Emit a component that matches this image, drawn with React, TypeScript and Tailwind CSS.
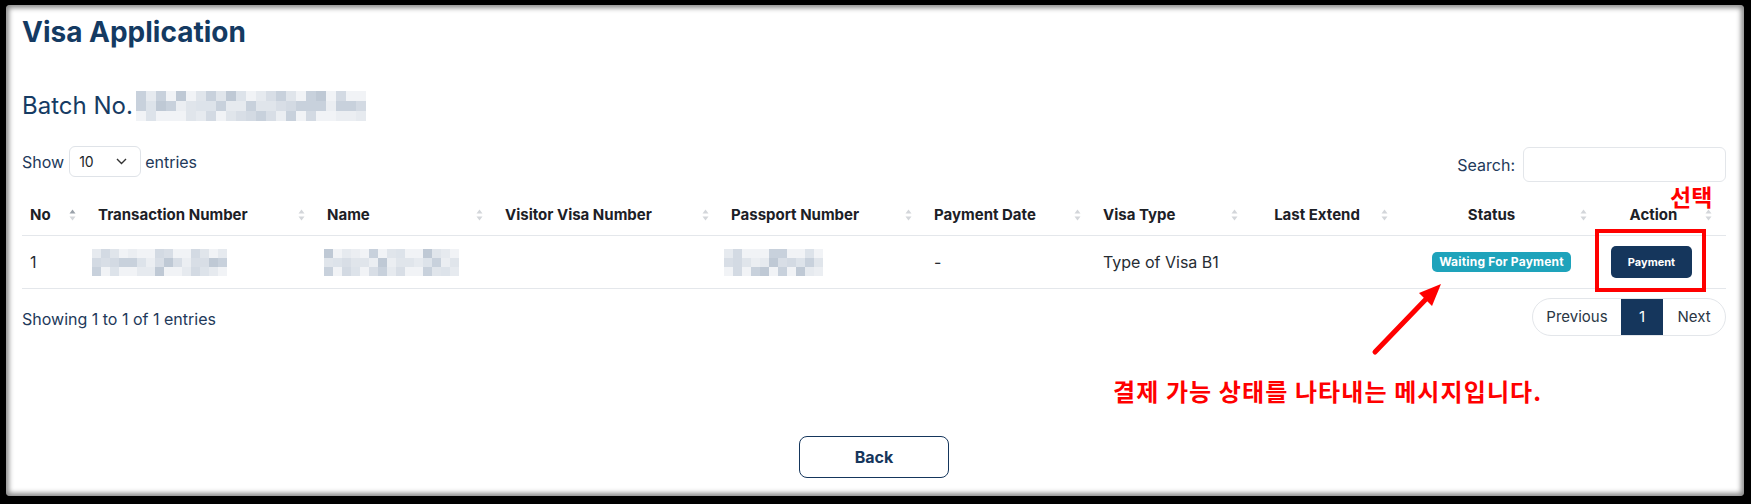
import React from "react";

function rand(seed: number) {
  let s = seed;
  return () => {
    s = (s * 9301 + 49297) % 233280;
    return s / 233280;
  };
}

const PALETTE = ["#e6eaef", "#dde3ea", "#d3dae3", "#c8d1dc", "#bfc9d5", "#e0e5eb", "#ebeef2", "#d8dee6"];

function Mosaic({ cols, rows, seed, cell, className }: { cols: number; rows: number; seed: number; cell: number; className?: string }) {
  const r = rand(seed);
  const cells: string[] = [];
  for (let i = 0; i < cols * rows; i++) {
    const row = Math.floor(i / cols);
    const edge = row === 0 || row === rows - 1;
    const idx = Math.floor(r() * PALETTE.length);
    cells.push(edge && r() > 0.6 ? "#f1f3f6" : PALETTE[idx]);
  }
  return (
    <div
      className={"grid shrink-0 blur-[0.6px] " + (className ?? "")}
      style={{ gridTemplateColumns: `repeat(${cols}, ${cell}px)`, gridAutoRows: `${cell}px` }}
    >
      {cells.map((c, i) => (
        <div key={i} style={{ background: c }} />
      ))}
    </div>
  );
}

function SortIcon({ active }: { active?: boolean }) {
  return (
    <svg width="7" height="13" viewBox="0 0 7 13" className="absolute right-[14px] top-1/2 -translate-y-1/2">
      <path d="M0.5 5 L3.5 1 L6.5 5 Z" fill={active ? "#9aa1a9" : "#d3d6da"} />
      <path d="M0.5 8 L3.5 12 L6.5 8 Z" fill="#d3d6da" />
    </svg>
  );
}

const headers: { label: string; center?: boolean; active?: boolean }[] = [
  { label: "No", active: true },
  { label: "Transaction Number" },
  { label: "Name" },
  { label: "Visitor Visa Number" },
  { label: "Passport Number" },
  { label: "Payment Date" },
  { label: "Visa Type" },
  { label: "Last Extend", center: true },
  { label: "Status", center: true },
  { label: "Action", center: true },
];

const GRID = "grid grid-cols-[68px_229px_178px_226px_203px_169px_157px_150px_199px_125px]";

export default function App() {
  return (
    <div className="relative w-[1751px] h-[504px] bg-black overflow-hidden" style={{ fontFamily: "Inter, 'Noto Sans', sans-serif" }}>
      <div className="absolute left-[6px] top-[5px] right-[7px] bottom-[8px] bg-white rounded-[4px] shadow-[inset_0_0_5px_3px_rgba(0,0,0,0.45)]" />
      <div className="relative pl-[22px] pr-[25px] pt-[14px]">
        <h1 className="text-[28px] leading-[36px] font-bold text-[#143a62]">Visa Application</h1>

        <div className="mt-[40px] flex items-center h-[32px]">
          <span className="text-[24px] leading-[32px] text-[#163b63]">Batch No.</span>
          <Mosaic cols={23} rows={3} cell={10} seed={7} className="ml-[3px]" />
        </div>

        <div className="mt-[24px] flex items-start justify-between h-[36px] text-[16px] text-[#22395a]">
          <div className="flex items-center h-[31px]">
            <span>Show</span>
            <div className="ml-[5px] w-[72px] h-[31px] border border-[#dfe3e8] rounded-[6px] flex items-center justify-between pl-[9px] pr-[13px] text-[14px] text-[#212529]">
              <span>10</span>
              <svg width="11" height="7" viewBox="0 0 11 7"><path d="M1 1 L5.5 5.5 L10 1" fill="none" stroke="#333" strokeWidth="1.4" /></svg>
            </div>
            <span className="ml-[4px]">entries</span>
          </div>
          <div className="flex items-center mt-[1px]">
            <span>Search:</span>
            <div className="ml-[8px] w-[203px] h-[35px] border border-[#e3e6ea] rounded-[6px]" />
          </div>
        </div>

        <div className="mt-[13px]">
          <div className={GRID + " border-b border-[#e4e7eb]"}>
            {headers.map((h) => (
              <div
                key={h.label}
                className={"relative flex items-center h-[40px] pl-2 pr-[28px] text-[15px] font-bold text-[#1c2026] whitespace-nowrap " + (h.center ? "justify-center" : "")}
              >
                {h.label}
                <SortIcon active={h.active} />
              </div>
            ))}
          </div>
          <div className={GRID + " border-b border-[#e4e7eb] text-[16px] text-[#262c33]"}>
            <div className="flex items-center h-[52px] px-2">1</div>
            <div className="flex items-center h-[52px]">
              <Mosaic cols={15} rows={3} cell={9} seed={21} className="ml-[2px]" />
            </div>
            <div className="flex items-center h-[52px] pl-[5px]">
              <Mosaic cols={15} rows={3} cell={9} seed={33} />
            </div>
            <div className="flex items-center h-[52px] px-2" />
            <div className="flex items-center h-[52px] pl-[1px]">
              <Mosaic cols={11} rows={3} cell={9} seed={45} />
            </div>
            <div className="flex items-center h-[52px] px-2">-</div>
            <div className="flex items-center h-[52px] px-2 whitespace-nowrap">Type of Visa B1</div>
            <div className="flex items-center h-[52px] px-2" />
            <div className="flex items-center justify-center h-[52px] px-2">
              <span className="bg-[#1ea3bb] text-white text-[12px] font-bold rounded-[5px] h-[20px] px-[7px] flex items-center whitespace-nowrap tracking-[0.2px]">
                Waiting For Payment
              </span>
            </div>
            <div className="flex items-center justify-center h-[52px] pl-2 pr-[32px]">
              <span className="bg-[#15365c] text-white text-[11px] font-bold rounded-[5px] w-[81px] h-[32px] flex items-center justify-center">
                Payment
              </span>
            </div>
          </div>
        </div>

        <div className="mt-[9px] flex items-center justify-between">
          <span className="text-[16px] text-[#22395a] mt-[3px]">Showing 1 to 1 of 1 entries</span>
          <div className="flex h-[38px] border border-[#e3e6ea] rounded-[19px] overflow-hidden text-[15px] text-[#2a3644]">
            <div className="w-[88px] flex items-center justify-center">Previous</div>
            <div className="w-[42px] flex items-center justify-center bg-[#15365c] text-white">1</div>
            <div className="w-[62px] flex items-center justify-center">Next</div>
          </div>
        </div>

        <div className="mt-[100px] flex justify-center">
          <div className="w-[150px] h-[42px] border-[1.5px] border-[#15365c] rounded-[8px] flex items-center justify-center text-[16px] font-bold text-[#15365c]">
            Back
          </div>
        </div>
      </div>

      {/* annotations */}
      <div className="absolute left-[1595px] top-[229px] w-[111px] h-[63px] border-4 border-[#ff0000]" />
      <div
        className="absolute left-[1670px] top-[185px] text-[23px] font-bold text-[#ff0000] leading-none"
        style={{ fontFamily: "'Noto Sans CJK KR', sans-serif" }}
      >
        선택
      </div>
      <div
        className="absolute left-[1113px] top-[379px] text-[24px] font-bold text-[#ff0000] leading-none tracking-[1.1px] whitespace-nowrap"
        style={{ fontFamily: "'Noto Sans CJK KR', sans-serif" }}
      >
        결제 가능 상태를 나타내는 메시지입니다.
      </div>
      <svg className="absolute left-0 top-0 pointer-events-none" width="1751" height="504">
        <line x1="1375" y1="352" x2="1428" y2="297" stroke="#ff0000" strokeWidth="5" strokeLinecap="round" />
        <path d="M1441 284 L1419 293 L1432 306 Z" fill="#ff0000" />
      </svg>
    </div>
  );
}
